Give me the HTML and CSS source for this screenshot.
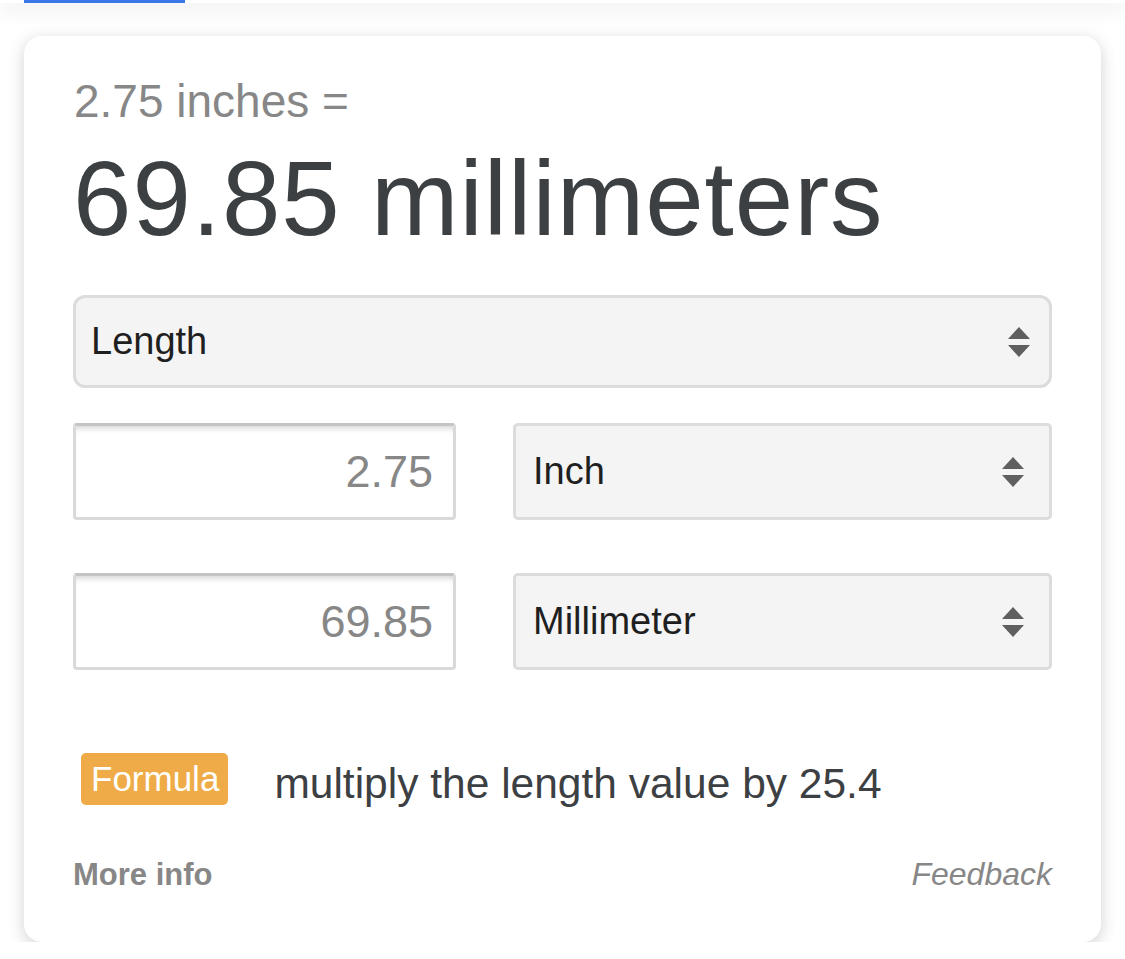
FILE: index.html
```html
<!DOCTYPE html>
<html>
<head>
<meta charset="utf-8">
<link rel="stylesheet" href="styles.css">
</head>
<body>
<div class="topbar"><div class="tab-indicator"></div></div>
<div class="card">
  <div class="source">2.75 inches =</div>
  <div class="result">69.85 millimeters</div>
  <div class="select select-wide">
    <span class="select-label">Length</span>
    <svg class="arrows" width="22" height="32" viewBox="0 0 22 32"><path d="M11 1 L22 13 L0 13 Z" fill="#5f5f5f"/><path d="M0 19 L22 19 L11 31 Z" fill="#5f5f5f"/></svg>
  </div>
  <div class="row">
    <div class="field">2.75</div>
    <div class="select select-unit">
      <span class="select-label">Inch</span>
      <svg class="arrows" width="22" height="32" viewBox="0 0 22 32"><path d="M11 1 L22 13 L0 13 Z" fill="#5f5f5f"/><path d="M0 19 L22 19 L11 31 Z" fill="#5f5f5f"/></svg>
    </div>
  </div>
  <div class="row row-second">
    <div class="field">69.85</div>
    <div class="select select-unit">
      <span class="select-label">Millimeter</span>
      <svg class="arrows" width="22" height="32" viewBox="0 0 22 32"><path d="M11 1 L22 13 L0 13 Z" fill="#5f5f5f"/><path d="M0 19 L22 19 L11 31 Z" fill="#5f5f5f"/></svg>
    </div>
  </div>
  <div class="formula">
    <span class="badge">Formula</span>
    <span class="formula-text">multiply the length value by 25.4</span>
  </div>
  <div class="footer">
    <span class="more">More info</span>
    <span class="feedback">Feedback</span>
  </div>
</div>
</body>
</html>
```
FILE: styles.css
```css
html, body {
  margin: 0;
  padding: 0;
  background: #ffffff;
  font-family: "Liberation Sans", Arial, sans-serif;
}
.topbar {
  height: 3px;
  background: #ffffff;
  box-shadow: 0 4px 18px rgba(60, 64, 67, 0.3);
  position: relative;
}
.tab-indicator {
  margin-left: 24px;
  width: 161px;
  height: 3px;
  background: #3b78e7;
}
.card {
  margin: 33px 24px 0 24px;
  height: 906px;
  box-sizing: border-box;
  border-radius: 18px;
  background: #fff;
  box-shadow: 0 4px 16px rgba(60, 64, 67, 0.24);
  padding: 38px 49px 0 49px;
}
.source {
  font-size: 46px;
  line-height: 54px;
  color: #878787;
  padding-left: 1px;
}
.result {
  margin-top: 11px;
  font-size: 105px;
  line-height: 120px;
  letter-spacing: 1px;
  color: #3c4043;
}
.select {
  box-sizing: border-box;
  background: #f4f4f4;
  border: 3px solid #dcdcdc;
  display: flex;
  align-items: center;
  justify-content: space-between;
  color: #1f1f1f;
}
.select-wide {
  margin-top: 36px;
  height: 93px;
  border-radius: 12px;
  padding: 0 19px 0 15px;
}
.select-label {
  font-size: 38px;
}
.arrows {
  display: block;
}
.row {
  margin-top: 35px;
  display: flex;
  gap: 57px;
  height: 97px;
}
.row-second {
  margin-top: 53px;
}
.field {
  box-sizing: border-box;
  width: 383px;
  height: 97px;
  border: 3px solid #d9d9d9;
  border-top-color: #c4c4c4;
  border-radius: 4px;
  box-shadow: inset 0 6px 6px -4px rgba(0, 0, 0, 0.18);
  display: flex;
  align-items: center;
  justify-content: flex-end;
  padding-right: 20px;
  font-size: 45px;
  color: #878787;
}
.select-unit {
  flex: 1;
  height: 97px;
  border-radius: 5px;
  padding: 0 25px 0 17px;
}
.formula {
  margin-top: 83px;
  display: flex;
  align-items: center;
  padding-left: 8px;
}
.badge {
  background: #efab47;
  color: #ffffff;
  font-size: 35px;
  line-height: 52px;
  height: 52px;
  padding: 0 9px 0 10px;
  border-radius: 5px;
}
.formula-text {
  margin-left: 46px;
  font-size: 42.5px;
  color: #3c4043;
  position: relative;
  top: 5px;
}
.footer {
  margin-top: 51px;
  display: flex;
  justify-content: space-between;
  align-items: baseline;
  color: #878787;
}
.more {
  font-weight: bold;
  font-size: 31px;
}
.feedback {
  font-style: italic;
  font-size: 32px;
}
```
